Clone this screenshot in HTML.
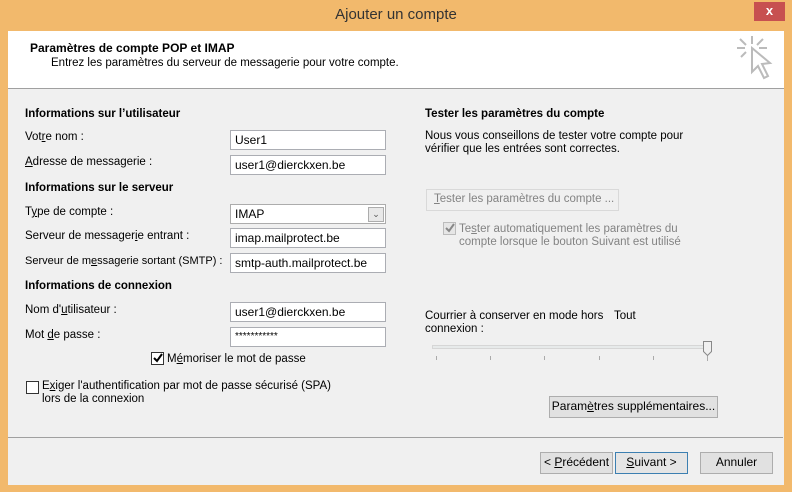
<!DOCTYPE html>
<html><head><meta charset="utf-8"><style>
*{margin:0;padding:0;box-sizing:border-box}
body{width:792px;height:492px;background:#f2b96c;position:relative;overflow:hidden;font-family:"Liberation Sans",sans-serif;font-size:11.5px;color:#000}
.a{position:absolute;white-space:nowrap}
.b{font-weight:bold}
.in{position:absolute;background:#fff;border:1px solid #abadb3;height:20px;padding:2px 0 0 4px;font-size:12px;white-space:nowrap}
.btn{position:absolute;background:#e1e1e1;border:1px solid #adadad;height:22px;text-align:center;line-height:19px;font-size:12px;white-space:nowrap}
.cb{position:absolute;width:13px;height:13px;border:1px solid #333;background:#fff}
u{text-decoration:underline}
</style></head><body>
<div class="a" style="left:0;top:6px;width:792px;text-align:center;font-size:15px;color:#333">Ajouter un compte</div>
<div class="a" style="left:754px;top:2px;width:31px;height:19px;background:#c75050;color:#fff;text-align:center;font-size:13px;line-height:18px;font-weight:bold">x</div>
<div class="a" style="left:8px;top:31px;width:776px;height:454px;background:#f0f0f0"></div>
<div class="a" style="left:8px;top:31px;width:776px;height:58px;background:#fff;border-bottom:1px solid #a0a0a0"></div>
<div class="a b" style="left:30px;top:41px;font-size:12px">Paramètres de compte POP et IMAP</div>
<div class="a" style="left:51px;top:57px">Entrez les paramètres du serveur de messagerie pour votre compte.</div>
<svg class="a" style="left:736px;top:34px" width="40" height="52" viewBox="0 0 40 52"><g stroke="#bbb" stroke-width="2" fill="none"><path d="M4 5l6 6M16 2v8M27 5l-6 6M1 14h8M23 14h8M5 23l5-5M16 14l0 24 6-6 6 12 4-2-6-12 8-1z"/></g></svg>

<div class="a b" style="left:25px;top:108px">Informations sur l’utilisateur</div>
<div class="a" style="left:25px;top:131px">Vot<u>r</u>e nom :</div>
<div class="in" style="left:230px;top:130px;width:156px">User1</div>
<div class="a" style="left:25px;top:156px"><u>A</u>dresse de messagerie :</div>
<div class="in" style="left:230px;top:155px;width:156px">user1@dierckxen.be</div>
<div class="a b" style="left:25px;top:182px">Informations sur le serveur</div>
<div class="a" style="left:25px;top:206px">T<u>y</u>pe de compte :</div>
<div class="in" style="left:230px;top:204px;width:156px;border-color:#acacac">IMAP</div>
<div class="a" style="left:368px;top:207px;width:16px;height:15px;border:1px solid #acacac;background:#e8e8e8;font-size:9px;text-align:center;line-height:13px;color:#555">&#8964;</div>
<div class="a" style="left:25px;top:230px">Serveur de messager<u>i</u>e entrant :</div>
<div class="in" style="left:230px;top:228px;width:156px">imap.mailprotect.be</div>
<div class="a" style="left:25px;top:255px;font-size:11px">Serveur de m<u>e</u>ssagerie sortant (SMTP) :</div>
<div class="in" style="left:230px;top:253px;width:156px">smtp-auth.mailprotect.be</div>
<div class="a b" style="left:25px;top:280px">Informations de connexion</div>
<div class="a" style="left:25px;top:304px">Nom d'<u>u</u>tilisateur :</div>
<div class="in" style="left:230px;top:302px;width:156px">user1@dierckxen.be</div>
<div class="a" style="left:25px;top:329px">Mot <u>d</u>e passe :</div>
<div class="in" style="left:230px;top:327px;width:156px;font-size:10px;padding-top:3px">***********</div>
<div class="cb" style="left:151px;top:352px"></div>
<svg class="a" style="left:152px;top:353px" width="11" height="11"><path d="M2 5l3 3 5-7" stroke="#000" stroke-width="2" fill="none"/></svg>
<div class="a" style="left:167px;top:353px">M<u>é</u>moriser le mot de passe</div>
<div class="cb" style="left:26px;top:381px"></div>
<div class="a" style="left:42px;top:380px;line-height:13px">E<u>x</u>iger l'authentification par mot de passe sécurisé (SPA)<br>lors de la connexion</div>

<div class="a b" style="left:425px;top:108px">Tester les paramètres du compte</div>
<div class="a" style="left:425px;top:130px;line-height:13px">Nous vous conseillons de tester votre compte pour<br>vérifier que les entrées sont correctes.</div>
<div class="btn" style="left:426px;top:189px;width:193px;background:#f0f0f0;border-color:#d9d9d9;color:#838383;text-align:left;padding-left:7px;font-size:11.5px"><u>T</u>ester les paramètres du compte ...</div>
<div class="cb" style="left:443px;top:222px;border-color:#bcbcbc;background:#e6e6e6"></div>
<svg class="a" style="left:444px;top:223px" width="11" height="11"><path d="M2 5l3 3 5-7" stroke="#888" stroke-width="2" fill="none"/></svg>
<div class="a" style="left:459px;top:223px;line-height:13px;color:#838383">Te<u>s</u>ter automatiquement les paramètres du<br>compte lorsque le bouton Suivant est utilisé</div>
<div class="a" style="left:425px;top:310px;line-height:13px">Courrier à conserver en mode hors<br>connexion :</div>
<div class="a" style="left:614px;top:310px">Tout</div>
<div class="a" style="left:432px;top:345px;width:278px;height:4px;background:#e7eaea;border:1px solid #d6d6d6"></div>
<svg class="a" style="left:703px;top:341px" width="10" height="15"><path d="M0.5 0.5h8v10l-4 4-4-4z" fill="#f0f0f0" stroke="#888"/></svg>
<svg class="a" style="left:430px;top:356px" width="290" height="6"><g stroke="#aaa"><path d="M6.5 0v4M60.5 0v4M114.5 0v4M169.5 0v4M223.5 0v4M277.5 0v5"/></g></svg>
<div class="btn" style="left:549px;top:396px;width:169px">Param<u>è</u>tres supplémentaires...</div>

<div class="a" style="left:8px;top:437px;width:775px;height:1px;background:#a0a0a0"></div>
<div class="btn" style="left:540px;top:452px;width:73px">&lt; <u>P</u>récédent</div>
<div class="btn" style="left:615px;top:452px;width:73px;border-color:#3c7fb1;background:#e5e5e5"><u>S</u>uivant &gt;</div>
<div class="btn" style="left:700px;top:452px;width:73px">Annuler</div>
</body></html>
